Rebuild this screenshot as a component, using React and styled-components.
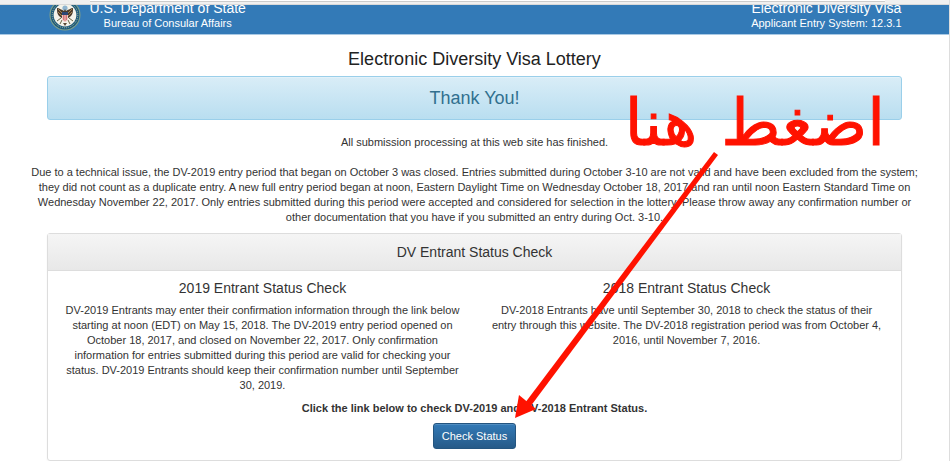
import React from "react";
import styled, { createGlobalStyle } from "styled-components";

const GlobalStyle = createGlobalStyle`
  * {
    box-sizing: border-box;
  }
  body {
    margin: 0;
    background-color: #fff;
    color: #333;
    font-family: "Liberation Sans", Arial, sans-serif;
    font-size: 11px;
    line-height: 15px;
  }
  h1, h2, h3, p {
    margin: 0;
    font-weight: normal;
  }
`;

const Page = styled.div`
  position: relative;
  overflow: hidden;
  border-right: 1px solid #ddd;
`;

const BrowserStrip = styled.div`
  height: 5px;
  padding: 0 64px 0 90px;
  background-color: #f0f0f0;
  border-bottom: 1px solid #d9d9d9;
`;

const AddressBar = styled.div`
  height: 2px;
  background-color: #fff;
  border-bottom: 1px solid #ccc;
`;

const Header = styled.header`
  height: 30px;
  overflow: hidden;
  background-color: #337ab7;
  border-bottom: 1px solid #a9c9e4;
  color: #fff;
`;

const Container = styled.div`
  width: 90%;
  margin: 0 auto;
`;

const HeaderRow = styled(Container)`
  display: flex;
  align-items: flex-end;
  height: 26px;
`;

const HeaderText = styled.div`
  margin-left: ${(props) => (props.$end ? "auto" : "8px")};
  text-align: center;
`;

const HeaderTitle = styled.div`
  font-size: 14px;
  line-height: 15px;
`;

const HeaderSub = styled.div`
  font-size: 11px;
  line-height: 15px;
`;

const SealIcon = styled.svg`
  flex: none;
  width: 32px;
  height: 32px;
  margin-left: 2px;
`;

const Main = styled(Container)`
  padding-top: 13px;
  text-align: center;
`;

const PageTitle = styled.h1`
  font-size: 18px;
  line-height: 22px;
  color: #222;
`;

const Alert = styled.div`
  margin: 6px 0 15px;
  padding: 10px;
  border: 1px solid #9acfea;
  border-radius: 3px;
  background-image: linear-gradient(to bottom, #d9edf7, #b9def0);
  box-shadow: inset 0 1px 0 rgba(255, 255, 255, 0.25);
  color: #31708f;
  font-size: 18px;
  line-height: 22px;
`;

const Notice = styled.p`
  margin: 0 -20px ${(props) => (props.$last ? "8px" : "15px")};
`;

const Panel = styled.section`
  border: 1px solid #ddd;
  border-radius: 3px;
  box-shadow: 0 1px 2px rgba(0, 0, 0, 0.05);
`;

const PanelHeading = styled.h2`
  padding: 9px;
  border-bottom: 1px solid #ddd;
  background-image: linear-gradient(to bottom, #f5f5f5, #e8e8e8);
  font-size: 14px;
  line-height: 18px;
`;

const Columns = styled.div`
  display: grid;
  grid-template-columns: 1fr 1fr;
  padding: 8px 2px;
`;

const Column = styled.div`
  padding: 0 13px;
`;

const ColumnTitle = styled.h3`
  margin-bottom: 6px;
  font-size: 14px;
  line-height: 18px;
`;

const PanelFooter = styled.div`
  display: flex;
  flex-direction: column;
  align-items: center;
  gap: 7px;
  padding-bottom: 11px;
`;

const StatusButton = styled.button`
  padding: 4px 8px;
  border: 1px solid #245580;
  border-radius: 3px;
  background-image: linear-gradient(to bottom, #337ab7, #265a88);
  box-shadow: inset 0 1px 0 rgba(255, 255, 255, 0.15);
  color: #fff;
  font-family: inherit;
  font-size: 11px;
  line-height: 16px;
  cursor: pointer;
`;

const Callout = styled.div`
  position: absolute;
  top: 83px;
  right: 64px;
  display: flex;
  gap: 24px;
  color: #ff1200;
  font-family: "DejaVu Sans", sans-serif;
  font-size: 64px;
  line-height: 80px;
  -webkit-text-stroke: 1px #ff1200;
  pointer-events: none;
`;

const Arrow = styled.svg`
  position: absolute;
  top: 150px;
  left: calc(50% + 38px);
  width: 206px;
  height: 270px;
  fill: #ff1200;
  pointer-events: none;
`;

const Seal = () => (
  <SealIcon viewBox="0 0 32 32" aria-hidden="true">
    <circle cx="16" cy="16" r="15.5" fill="#7fa08a" />
    <circle cx="16" cy="16" r="14.4" fill="#1d5a7c" />
    <circle
      cx="16"
      cy="16"
      r="12.8"
      fill="none"
      stroke="#a9bd9b"
      strokeWidth="1"
      strokeDasharray="1 1"
    />
    <circle cx="16" cy="16" r="11.4" fill="#f4f3ea" />
    <circle cx="16" cy="9" r="2.6" fill="#8fb4cf" />
    <path
      d="M15 12c-2-1-5-3-7-3 0 3 0 6 2 8l4 3h4l4-3c2-2 2-5 2-8-2 0-5 2-7 3l-1-2z"
      fill="#4c3b2b"
    />
    <path d="M9 10l4 4M9 13l4 4M23 10l-4 4M23 13l-4 4" stroke="#a58350" />
    <path d="M12 19l-4 3M20 19l4 3M13 21l-2 4M19 21l2 4" stroke="#6a6543" />
    <path d="M13 14h6v5q0 3-3 4-3-1-3-4z" fill="#f0c8c2" />
    <path d="M14.5 16v5M16 16v6M17.5 16v5" stroke="#c8505a" strokeWidth="0.7" />
    <path d="M13 13h6v3h-6z" fill="#2d4776" />
    <path d="M14 24h4l-2 3z" fill="#5a4a35" />
  </SealIcon>
);

const App = () => {
  return (
    <Page>
      <GlobalStyle />
      <BrowserStrip>
        <AddressBar />
      </BrowserStrip>
      <Header>
        <HeaderRow>
          <Seal />
          <HeaderText>
            <HeaderTitle>U.S. Department of State</HeaderTitle>
            <HeaderSub>Bureau of Consular Affairs</HeaderSub>
          </HeaderText>
          <HeaderText $end>
            <HeaderTitle>Electronic Diversity Visa</HeaderTitle>
            <HeaderSub>Applicant Entry System: 12.3.1</HeaderSub>
          </HeaderText>
        </HeaderRow>
      </Header>
      <Main as="main">
        <PageTitle>Electronic Diversity Visa Lottery</PageTitle>
        <Alert>Thank You!</Alert>
        <Notice>All submission processing at this web site has finished.</Notice>
        <Notice $last>
          Due to a technical issue, the DV-2019 entry period that began on
          October 3 was closed. Entries submitted during October 3-10 are not
          valid and have been excluded from the system; they did not count as a
          duplicate entry. A new full entry period began at noon, Eastern
          Daylight Time on Wednesday October 18, 2017 and ran until noon Eastern
          Standard Time on Wednesday November 22, 2017. Only entries submitted
          during this period were accepted and considered for selection in the
          lottery. Please throw away any confirmation number or other
          documentation that you have if you submitted an entry during Oct.
          3-10.
        </Notice>
        <Panel>
          <PanelHeading>DV Entrant Status Check</PanelHeading>
          <Columns>
            <Column>
              <ColumnTitle>2019 Entrant Status Check</ColumnTitle>
              <p>
                DV-2019 Entrants may enter their confirmation information
                through the link below starting at noon (EDT) on May 15, 2018.
                The DV-2019 entry period opened on October 18, 2017, and closed
                on November 22, 2017. Only confirmation information for entries
                submitted during this period are valid for checking your status.
                DV-2019 Entrants should keep their confirmation number until
                September 30, 2019.
              </p>
            </Column>
            <Column>
              <ColumnTitle>2018 Entrant Status Check</ColumnTitle>
              <p>
                DV-2018 Entrants have until September 30, 2018 to check the
                status of their entry through this website. The DV-2018
                registration period was from October 4, 2016, until November 7,
                2016.
              </p>
            </Column>
          </Columns>
          <PanelFooter>
            <strong>
              Click the link below to check DV-2019 and DV-2018 Entrant Status.
            </strong>
            <StatusButton type="button">Check Status</StatusButton>
          </PanelFooter>
        </Panel>
      </Main>
      <Callout dir="rtl" lang="ar">
        <span>اضغط</span>
        <span>هنا</span>
      </Callout>
      <Arrow viewBox="0 0 206 270" aria-hidden="true">
        <path d="M201 2l4 3L17 257l-5-4z" />
        <path d="M2 268l4-23 17 14z" />
      </Arrow>
    </Page>
  );
};

export default App;
